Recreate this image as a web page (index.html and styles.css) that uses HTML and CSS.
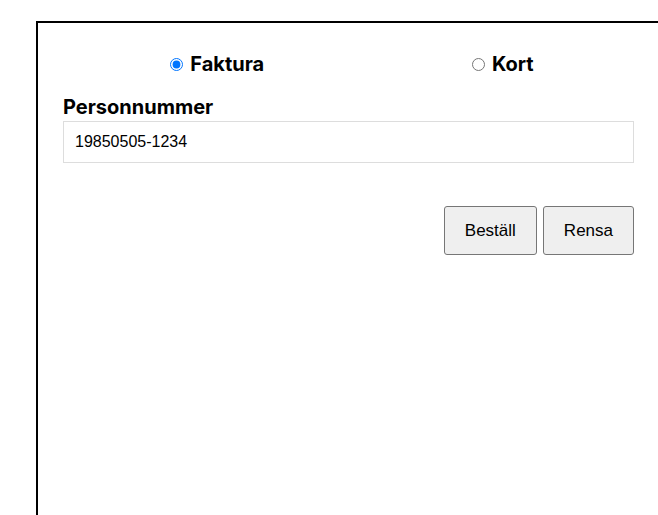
FILE: index.html
```html
<!DOCTYPE html>
<html lang="sv">
<head>
<meta charset="utf-8">
<title>Beställning</title>
<link rel="stylesheet" href="styles.css">
</head>
<body>
<form class="panel">
  <div class="pay-row">
    <label class="pay-option"><input type="radio" name="pay" checked> Faktura</label>
    <label class="pay-option"><input type="radio" name="pay"> Kort</label>
  </div>
  <label class="field-label" for="pnr">Personnummer</label>
  <input class="field-input" id="pnr" type="text" value="19850505-1234">
  <div class="actions">
    <button type="button" class="btn">Beställ</button>
    <button type="button" class="btn">Rensa</button>
  </div>
</form>
</body>
</html>
```
FILE: styles.css
```css
html, body {
  margin: 0;
  padding: 0;
  background: #fff;
}
body {
  padding: 21px 0 0 36px;
  overflow: hidden;
  height: 515px;
  box-sizing: border-box;
}
.panel {
  width: 571px;
  min-height: 600px;
  border: 2px solid #000;
  padding: 29px 25px;
  box-sizing: content-box;
  display: flex;
  flex-direction: column;
}
.pay-row {
  display: flex;
  justify-content: space-around;
  align-items: center;
  height: 24px;
}
.pay-option {
  font-family: Inter, "Liberation Sans", sans-serif;
  font-weight: 700;
  font-size: 20px;
  line-height: 24px;
  color: #000;
  display: inline-flex;
  align-items: center;
  gap: 7px;
}
.pay-option input {
  margin: 0 0 0 7px;
  width: 13px;
  height: 13px;
}
.field-label {
  margin-top: 19px;
  font-family: Inter, "Liberation Sans", sans-serif;
  font-weight: 700;
  font-size: 20px;
  line-height: 24px;
  color: #000;
}
.field-input {
  margin-top: 2px;
  height: 42px;
  box-sizing: border-box;
  border: 1px solid #ddd;
  padding: 0 11px;
  font-family: "Liberation Sans", Arial, sans-serif;
  font-size: 16px;
  color: #000;
  outline: none;
}
.actions {
  margin-top: 43px;
  display: flex;
  justify-content: flex-end;
  gap: 6px;
}
.btn {
  height: 49px;
  padding: 0 20px;
  font-family: "Liberation Sans", Arial, sans-serif;
  font-size: 17px;
  color: #000;
  background: #efefef;
  border: 1px solid #767676;
  border-radius: 3px;
}
```
